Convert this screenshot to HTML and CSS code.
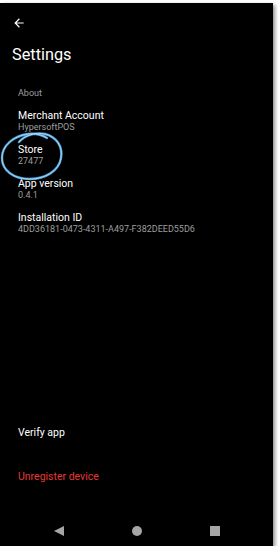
FILE: index.html
```html
<!DOCTYPE html>
<html lang="en">
<head>
    <meta charset="utf-8">
    <meta name="viewport" content="width=device-width, initial-scale=1">
    <title>Settings</title>
    <link rel="stylesheet" href="styles.css">
</head>
<body>
<div class="screen">
    <div class="toolbar">
        <svg class="back" width="14" height="14" viewBox="0 0 24 24">
            <path d="M20 11H7.83l5.59-5.59L12 4l-8 8 8 8 1.41-1.41L7.83 13H20v-2z" fill="#fff"/>
        </svg>
    </div>
    <h1 class="title">Settings</h1>

    <div class="section-label">About</div>

    <div class="item">
        <div class="item-title">Merchant Account</div>
        <div class="item-sub">HypersoftPOS</div>
    </div>
    <div class="item">
        <div class="item-title">Store</div>
        <div class="item-sub">27477</div>
    </div>
    <div class="item">
        <div class="item-title">App version</div>
        <div class="item-sub">0.4.1</div>
    </div>
    <div class="item">
        <div class="item-title">Installation ID</div>
        <div class="item-sub">4DD36181-0473-4311-A497-F382DEED55D6</div>
    </div>

    <div class="spacer"></div>

    <div class="action">Verify app</div>
    <div class="action danger">Unregister device</div>

    <div class="navbar">
        <svg width="12" height="12" viewBox="0 0 12 12"><path d="M11 1v10L1 6z" fill="#a6a6a6"/></svg>
        <svg width="12" height="12" viewBox="0 0 12 12"><circle cx="6" cy="6" r="5" fill="#a6a6a6"/></svg>
        <svg width="12" height="12" viewBox="0 0 12 12"><rect x="1" y="1" width="10" height="10" fill="#a6a6a6"/></svg>
    </div>

    <!-- hand-drawn highlight round the Store row -->
    <svg class="mark" width="66" height="56" viewBox="0 0 66 56">
        <path d="M19 15 C 25 8, 36 5, 45 7 C 57 10, 63 20, 61 31 C 59 44, 45 52, 30 52 C 13 52, 2 43, 2 31 C 2 18, 14 9, 28 7 C 36 6, 42 8, 47 11"
              fill="none" stroke="#4a9fd6" stroke-width="2.4" stroke-linecap="round"/>
        <path d="M19 15 C 25 8, 36 5, 45 7 C 57 10, 63 20, 61 31 C 59 44, 45 52, 30 52 C 13 52, 2 43, 2 31 C 2 18, 14 9, 28 7 C 36 6, 42 8, 47 11"
              fill="none" stroke="#c4e4f7" stroke-width="0.8" stroke-linecap="round"/>
    </svg>
</div>
</body>
</html>
```

FILE: styles.css
```css
body {
    margin: 0;
    background: #fff;
    font-family: Roboto, "Liberation Sans", sans-serif;
}

.screen {
    position: relative;
    width: 273px;
    height: 543px;
    margin-top: 3px;
    background: #000;
    box-shadow: 2px 2px 4px rgba(0, 0, 0, 0.45);
    display: flex;
    flex-direction: column;
}

.toolbar {
    height: 17px;
    padding: 13px 0 0 12px;
}

.back {
    display: block;
}

.title {
    margin: 11px 0 0 12px;
    font-size: 16.3px;
    font-weight: 400;
    color: #fff;
    line-height: 22px;
}

.section-label {
    margin: 21px 0 10px 18px;
    font-size: 9px;
    color: #9e9e9e;
    line-height: 12px;
}

.item {
    padding: 0 18px;
    margin-bottom: 10px;
}

.item-title {
    font-size: 10.5px;
    color: #fff;
    line-height: 13px;
}

.item-sub {
    font-size: 9px;
    color: #9e9e9e;
    line-height: 11px;
}

.spacer {
    flex: 1;
}

.action {
    padding: 0 18px;
    font-size: 10.5px;
    line-height: 13px;
    color: #fff;
    margin-bottom: 31px;
}

.action.danger {
    color: #e53935;
    margin-bottom: 33px;
}

.navbar {
    height: 30px;
    display: flex;
    justify-content: space-between;
    align-items: center;
    padding: 0 52px 0 53px;
}

.mark {
    position: absolute;
    left: 0;
    top: 124px;
}
```
